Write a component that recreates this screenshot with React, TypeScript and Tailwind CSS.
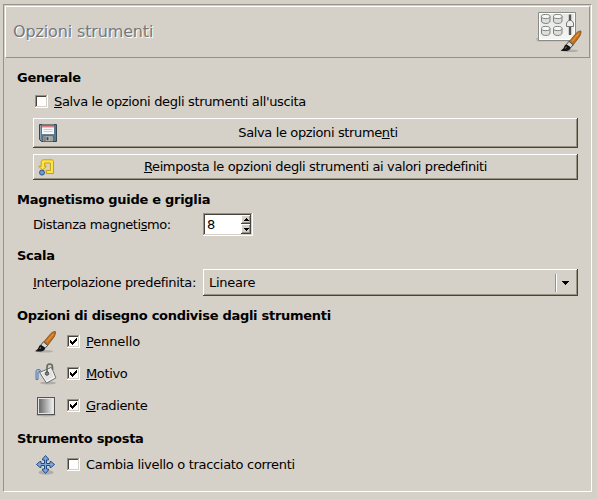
import React from "react";

const raised =
  "shadow-[inset_-1px_-1px_#48443b,inset_1px_1px_#ffffff,inset_-2px_-2px_#989284]";
const sunken =
  "shadow-[inset_-1px_-1px_#ffffff,inset_1px_1px_#989284,inset_-2px_-2px_#d5d0c8,inset_2px_2px_#48443b]";

function Key({ children }: { children: React.ReactNode }) {
  return (
    <span className="underline decoration-1 underline-offset-[1px] [text-decoration-skip-ink:none]">
      {children}
    </span>
  );
}

function Heading({ children, className }: { children: React.ReactNode; className: string }) {
  return <h2 className={`h-4 shrink-0 pl-[13px] font-bold tracking-[-0.29px] ${className}`}>{children}</h2>;
}

function CheckBox({ checked = false }: { checked?: boolean }) {
  return (
    <span className={`mb-px block h-[13px] w-[13px] shrink-0 bg-white ${sunken}`}>
      {checked && (
        <svg width="13" height="13" viewBox="0 0 13 13" shapeRendering="crispEdges">
          <path d="M3 5h1v1h1v1h1v-1h1v-1h1v-1h1v-1h1v3h-1v1h-1v1h-1v1h-1v1h-1v-1h-1v-1h-1z" fill="#000" />
        </svg>
      )}
    </span>
  );
}

function BrushShape() {
  return (
    <>
      <ellipse cx="10" cy="20.3" rx="8" ry="1.3" fill="#777" opacity=".4" />
      <path d="M8.2 11.6 15.8 2.6C17.4.9 20.3-.2 20.5.8c.2 1.2-.5 3.5-1.4 5.1L12.2 15z" fill="#c4701c" stroke="#7d4c1c" strokeWidth=".8" />
      <path d="M11.6 10.8 18.4 2.8" stroke="#e3983f" strokeWidth="1.1" />
      <path d="m8.5 10.8 4.1 3.6-2.6 3-4.2-3.3z" fill="#d8d8d8" stroke="#4c4c4c" />
      <path d="M6 13.9c-2.2.2-2.3 3-3.3 4.2-.6.8-1.5 1.4-2.6 2.1 3.6.8 8.1.5 9.5-1.5.6-1 .5-1.6.2-2.3z" fill="#141414" />
      <path d="M5.8 16.2 4.9 18" stroke="#999" strokeWidth=".9" />
    </>
  );
}

function Brush() {
  return (
    <svg width="22" height="22" viewBox="0 0 22 22">
      <BrushShape />
    </svg>
  );
}

function Bucket() {
  return (
    <svg width="22" height="22" viewBox="0 0 22 22">
      <ellipse cx="13" cy="20" rx="8" ry="1.4" fill="#777" opacity=".4" />
      <path d="M1 16.5V8.2C1 7 2 6.4 4.8 6.6L5.6 8 3 9.3v7.2z" fill="#a9c0df" stroke="#5878a9" />
      <path d="m4.6 9.5 11.9-5.2 4.4 10.6-9.4 5.2z" fill="#f6f6f6" stroke="#6b6d68" />
      <path d="m6.8 10.5 9-3.8 3 7.3-7.2 3.8z" fill="#e2e2e2" />
      <path d="M12 10.5V4.2C12 -.1 17.5-.1 17.5 4.2V7" fill="none" stroke="#626962" strokeWidth="1.6" />
      <circle cx="12" cy="10.5" r="1.7" fill="#888" stroke="#444" />
    </svg>
  );
}

function Gradient() {
  return (
    <svg width="22" height="22" viewBox="0 0 22 22">
      <defs>
        <linearGradient id="ramp">
          <stop stopColor="#686868" />
          <stop offset="1" stopColor="#eeeeee" />
        </linearGradient>
      </defs>
      <ellipse cx="11" cy="20" rx="10" ry="1.4" fill="#777" opacity=".45" />
      <rect x="2.5" y="2.5" width="17" height="17" fill="#e4e4e4" stroke="#555" />
      <rect x="4" y="4" width="14" height="14" fill="url(#ramp)" />
    </svg>
  );
}

function Move() {
  return (
    <svg width="22" height="22" viewBox="0 0 22 22">
      <ellipse cx="11" cy="18.4" rx="7.5" ry="2.4" fill="#777" opacity=".4" />
      <path
        d="m10.5 1.5 3 3.5v1h-2v3.5H15v-2h1l3.5 3-3.5 3h-1v-2h-3.5V15h2v1l-3 3.5-3-3.5v-1h2v-3.5H6v2H5l-3.5-3L5 7.5h1v2h3.5V6h-2V5z"
        fill="#7fa8d8" stroke="#204a87"
      />
    </svg>
  );
}

function Floppy() {
  return (
    <svg width="20" height="20" viewBox="0 0 20 20">
      <path d="M1.5 1.5h17v17h-15l-2-2z" fill="#58798e" stroke="#384650" />
      <path d="M2.5 2.5v13.4l1.5 1.6" fill="none" stroke="#88a4b7" />
      <path d="M4 1.7h12v9.4H4z" fill="#f7f7f7" />
      <path d="M4 2h12v1.8H4z" fill="#cf5555" />
      <path d="M4 3.8h12v.9H4z" fill="#e9a9a9" />
      <path d="M5.5 6.5h9M5.5 8.5h9" stroke="#cccccc" />
      <path d="M5 13h10v5.4H5z" fill="#c8c9c4" stroke="#555" strokeWidth=".6" />
      <path d="M5.5 13.5h2.3v4.5H5.5z" fill="#7c8185" />
      <path d="M8.5 14.2h2v3h-2z" fill="#33414c" />
      <path d="M11.5 13.5h3v4.5h-3z" fill="#a4a5a1" />
    </svg>
  );
}

function Reset() {
  return (
    <svg width="17" height="17" viewBox="0 0 17 17">
      <path d="M5.5.8h8.2c1.1 0 1.8.7 1.8 1.8v11.9H8.4v-3h4V4H6.7v3.3h1.7L4.6 11 .7 7.3H3.2V3.2C3.2 1.8 4.1.8 5.5.8z" fill="#fce44d" stroke="#c9a000" />
      <circle cx="4" cy="13.6" r="2.5" fill="#6f97c8" stroke="#2c5690" />
    </svg>
  );
}

function OptionsIcon() {
  return (
    <svg className="mt-[2px]" width="48" height="48" viewBox="0 0 48 48">
      <defs>
        <linearGradient id="panel" x2="0" y2="1">
          <stop stopColor="#e4e6e2" />
          <stop offset="1" stopColor="#f6f6f4" />
        </linearGradient>
      </defs>
      <path d="M0 29h40v3.5H1z" fill="#777" opacity=".3" />
      <path d="M2.5 3.5h37v28h-37z" fill="url(#panel)" stroke="#898b87" />
      <path d="M3.5 4.5h35v26h-35z" fill="none" stroke="#ffffff" />
      {[[5, 5], [17, 5], [5, 17], [17, 17]].map(([x, y]) => (
        <g key={`${x}-${y}`} fill="#dededb" stroke="#7f817d">
          <path d={`M${x + 0.5} ${y + 2.5}v4.5c0 3.3 8.5 3.3 8.5 0V${y + 2.5}z`} />
          <ellipse cx={x + 4.75} cy={y + 2.5} rx="4.25" ry="2.1" fill="#f7f7f5" />
        </g>
      ))}
      <path d="M34 5.5v20.5" stroke="#555753" strokeWidth="2.4" />
      <path d="M30.5 17.5v-3.5l2-2.5h3l2 2.5v3.5z" fill="#eee" stroke="#777" />
      <g transform="translate(24.5 21.5)">
        <BrushShape />
      </g>
    </svg>
  );
}

function Shared({ icon, children }: { icon: React.ReactNode; children: React.ReactNode }) {
  return (
    <label className="flex h-8 shrink-0 items-center pl-[31px]">
      {icon}
      <span className="ml-[10px] flex items-center gap-[6px]">
        {children}
      </span>
    </label>
  );
}

export default function App() {
  return (
    <div className="h-[499px] w-[597px] bg-[#d5d0c8] pt-1 pl-[3px] font-['DejaVu_Sans',sans-serif] text-[13px] leading-4 tracking-[-0.37px] text-black">
      <main className="flex h-[488px] w-[589px] flex-col border border-t-[#989284] border-r-white border-b-white border-l-[#989284]">
        <header className="mx-px mt-px flex h-[52px] shrink-0 items-center justify-between border border-t-white border-r-[#989284] border-b-[#989284] border-l-white pr-[5px] pl-[7px]">
          <h1 className="text-[16px] leading-5 tracking-[-0.14px] text-[#787878] [text-shadow:1px_1px_#ffffff]">Opzioni strumenti</h1>
          <OptionsIcon />
        </header>

        <Heading className="mt-3">Generale</Heading>
        <label className="mt-2 flex h-4 shrink-0 items-center pl-[31px]">
          <CheckBox />
          <span className="ml-[6px] tracking-[-0.34px]"><Key>S</Key>alva le opzioni degli strumenti all'uscita</span>
        </label>
        <button className={`mt-2 ml-[29px] flex h-[30px] w-[545px] shrink-0 items-center pl-[5px] ${raised}`}>
          <Floppy />
          <span className="flex-1 text-center">Salva le opzioni strume<Key>n</Key>ti</span>
        </button>
        <button className={`mt-[6px] ml-[29px] flex h-[26px] w-[545px] shrink-0 items-center pr-[2px] pl-[5px] ${raised}`}>
          <Reset />
          <span className="flex-1 text-center"><Key>R</Key>eimposta le opzioni degli strumenti ai valori predefiniti</span>
        </button>

        <Heading className="mt-3">Magnetismo guide e griglia</Heading>
        <div className="mt-[5px] flex h-[23px] shrink-0 items-center pl-[29px]">
          <span className="w-[170px] tracking-[-0.42px]">Distanza magneti<Key>s</Key>mo:</span>
          <div className={`flex h-[23px] w-[50px] bg-white py-[2px] pr-[2px] pl-1 ${sunken}`}>
            <span className="flex-1 leading-[19px]">8</span>
            <div className="flex w-[10px] flex-col">
              <span className={`flex h-[9px] items-center justify-center bg-[#d5d0c8] ${raised}`}>
                <svg width="5" height="3" viewBox="0 0 5 3" shapeRendering="crispEdges"><path d="M2 0h1v1h1v1h1v1H0V2h1V1h1z" /></svg>
              </span>
              <span className={`flex h-[10px] items-center justify-center bg-[#d5d0c8] ${raised}`}>
                <svg width="5" height="3" viewBox="0 0 5 3" shapeRendering="crispEdges"><path d="M0 0h5v1H4v1H3v1H2V2H1V1H0z" /></svg>
              </span>
            </div>
          </div>
        </div>

        <Heading className="mt-3">Scala</Heading>
        <div className="mt-[5px] flex h-[27px] shrink-0 items-center pl-[29px]">
          <span className="w-[170px] tracking-[-0.34px] whitespace-nowrap"><Key>I</Key>nterpolazione predefinita:</span>
          <button className={`flex h-[27px] w-[375px] items-center pr-[9px] pl-[6px] text-left ${raised}`}>
            <span className="flex-1 tracking-[-0.25px]">Lineare</span>
            <span className="mr-[5px] h-[18px] w-[2px] border-r border-l border-r-white border-l-[#989284]" />
            <svg width="7" height="4" viewBox="0 0 7 4" shapeRendering="crispEdges"><path d="M0 0h7v1H6v1H5v1H4v1H3V3H2V2H1V1H0z" /></svg>
          </button>
        </div>

        <Heading className="mt-3">Opzioni di disegno condivise dagli strumenti</Heading>
        <div className="mt-[2px] flex flex-col">
          <Shared icon={<Brush />}><CheckBox checked /><span className="tracking-[-0.13px]"><Key>P</Key>ennello</span></Shared>
          <Shared icon={<Bucket />}><CheckBox checked /><span><Key>M</Key>otivo</span></Shared>
          <Shared icon={<Gradient />}><CheckBox checked /><span><Key>G</Key>radiente</span></Shared>
        </div>
        <Heading className="mt-[9px]">Strumento sposta</Heading>
        <div className="mt-[2px]">
          <Shared icon={<Move />}><CheckBox /><span className="tracking-[-0.31px]">Cambia livello o tracciato correnti</span></Shared>
        </div>
      </main>
    </div>
  );
}
